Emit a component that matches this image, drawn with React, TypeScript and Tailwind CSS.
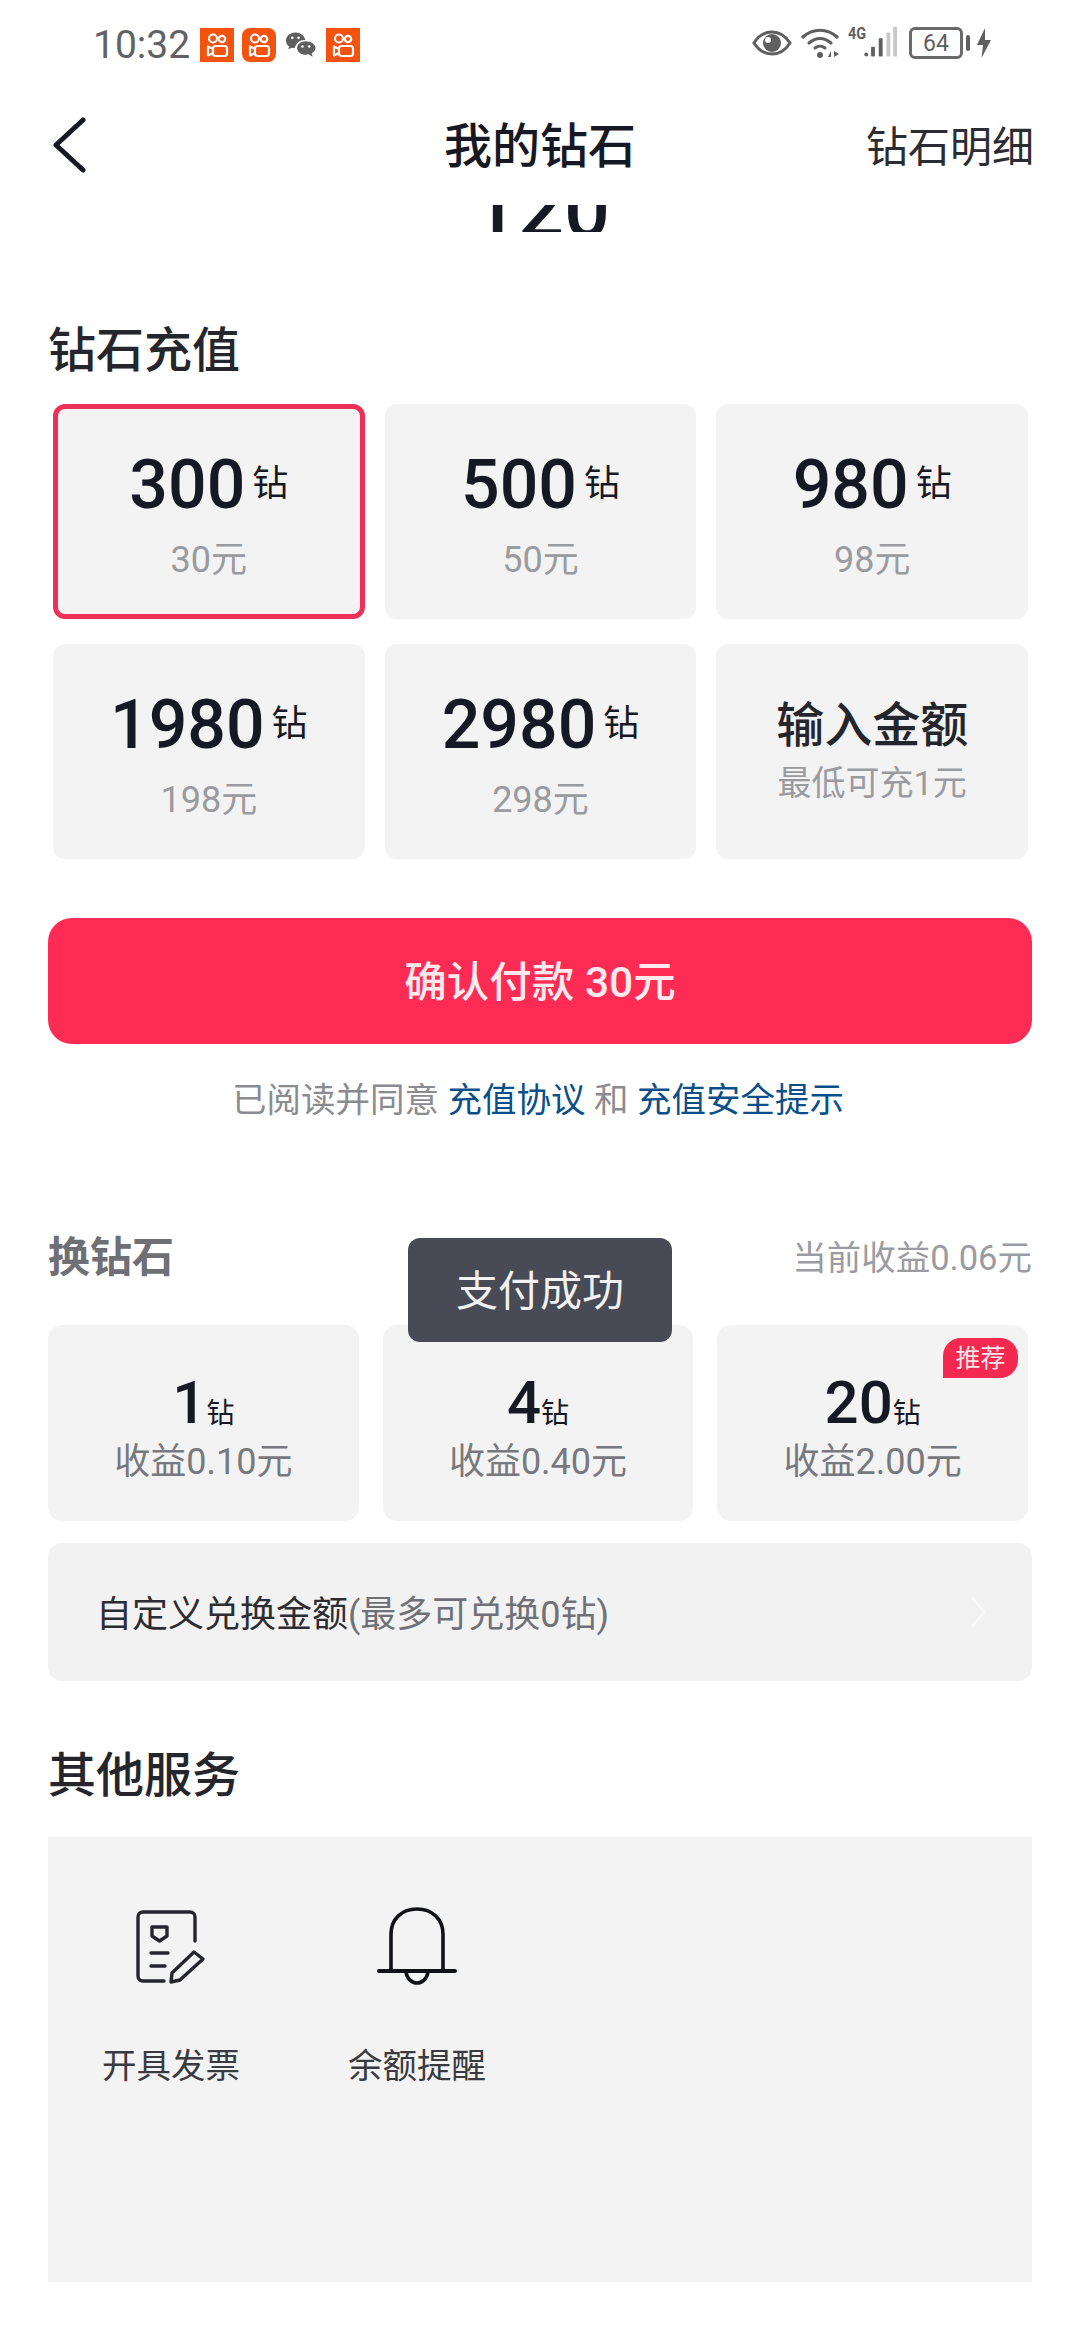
const fontStack = { fontFamily: '"Roboto", "Noto Sans CJK SC", sans-serif' }

const rechargeOptions = [
  { amount: '300', price: '30元', selected: true },
  { amount: '500', price: '50元' },
  { amount: '980', price: '98元' },
  { amount: '1980', price: '198元' },
  { amount: '2980', price: '298元' },
]

const exchangeOptions = [
  { amount: '1', income: '收益0.10元' },
  { amount: '4', income: '收益0.40元' },
  { amount: '20', income: '收益2.00元', badge: true },
]

function KuaishouIcon({ rounded = false }: { rounded?: boolean }) {
  return (
    <svg width="34" height="34" viewBox="0 0 34 34" className={rounded ? 'rounded-[8px]' : ''}>
      <rect width="34" height="34" fill="#f4520f" />
      <g fill="none" stroke="#fff" strokeWidth="2.2">
        <circle cx="13" cy="10.5" r="4" />
        <circle cx="22" cy="11" r="3.2" />
        <rect x="13" y="18" width="14" height="10" rx="2.5" />
        <path d="M13 21 L8 18.5 V27.5 L13 25" strokeLinejoin="round" />
      </g>
    </svg>
  )
}

function WeChatIcon() {
  return (
    <svg width="31" height="28" viewBox="0 0 32 28">
      <path d="M11 1C5 1 1 5 1 9.500C1 12 2.300 14 4.300 15.500L3.500 18.500L7 16.800C8 17.100 9 17.200 10 17.200C12 10 17 8.500 21 8.800C20 4.300 16 1 11 1Z" fill="#5f5f5f" />
      <path d="M21.500 10C16.500 10 12.500 13 12.500 17C12.500 21 16.500 24 21.500 24C22.500 24 23.500 23.800 24.500 23.500L28.500 26L27.500 22.500C30 21 31.500 19.200 31.500 17C31.500 13 26.500 10 21.500 10Z" fill="#5f5f5f" />
      <circle cx="7.500" cy="6.500" r="1.400" fill="#fff" />
      <circle cx="14" cy="6.500" r="1.400" fill="#fff" />
      <circle cx="18" cy="15.500" r="1.300" fill="#fff" />
      <circle cx="25" cy="15.500" r="1.300" fill="#fff" />
    </svg>
  )
}

function StatusRight() {
  return (
    <div className="flex items-center absolute left-[752px] top-[26px] h-[34px]">
      {/* eye */}
      <svg width="40" height="26" viewBox="0 0 40 26">
        <path d="M2 13C7 5 13 2 20 2C27 2 33 5 38 13C33 21 27 24 20 24C13 24 7 21 2 13Z" fill="none" stroke="#5f5f5f" strokeWidth="3" />
        <circle cx="20" cy="13" r="9" fill="#5f5f5f" />
        <circle cx="16" cy="10" r="3" fill="#fff" />
      </svg>
      {/* wifi */}
      <svg width="40" height="30" viewBox="0 0 40 30" className="ml-[9px]">
        <path d="M2 9C12 0 26 0 36 9" fill="none" stroke="#5f5f5f" strokeWidth="3.200" strokeLinecap="round" />
        <path d="M8 15C15 9 23 9 30 15" fill="none" stroke="#5f5f5f" strokeWidth="3.200" strokeLinecap="round" />
        <path d="M14 20C17 17.500 21 17.500 24 20" fill="none" stroke="#5f5f5f" strokeWidth="3" strokeLinecap="round" />
        <circle cx="19" cy="27" r="3" fill="#5f5f5f" />
        <path d="M27 29L30 23V29ZM33 23L38 26L33 29Z" fill="#5f5f5f" />
      </svg>
      {/* signal */}
      <div className="relative w-[50px] h-[34px] ml-[7px]">
        <span className="absolute left-0 top-[-3px] text-[17px] font-bold text-[#5f5f5f] leading-[20px] scale-x-[0.85] origin-left">4G</span>
        <svg width="50" height="34" viewBox="0 0 52 34" className="absolute left-0 top-0">
          <circle cx="19" cy="29" r="2" fill="#5f5f5f" />
          <rect x="24" y="21" width="4" height="10" rx="1" fill="#5f5f5f" />
          <rect x="32" y="12" width="4" height="19" rx="1" fill="#5f5f5f" />
          <rect x="40" y="6" width="4" height="25" rx="1" fill="#c9c9c9" />
          <rect x="47" y="0" width="4" height="31" rx="1" fill="#c9c9c9" />
        </svg>
      </div>
      {/* battery */}
      <div className="flex items-center justify-center w-[54px] h-[32px] ml-[11px] border-[3px] border-[#6a6a6a] rounded-[6px] text-[23px] leading-none text-[#5f5f5f]">
        64
      </div>
      <div className="w-[4px] h-[16px] ml-[3px] rounded-[2px] bg-[#5f5f5f]" />
      <svg width="16" height="30" viewBox="0 0 16 30" className="ml-[6px]">
        <path d="M9 0L1 17H7L5.500 30L15 12H9Z" fill="#5f5f5f" />
      </svg>
    </div>
  )
}

function InvoiceIcon() {
  return (
    <svg width="72" height="76" viewBox="0 0 72 76" fill="none" stroke="#25262b" strokeWidth="3.400" strokeLinecap="round" strokeLinejoin="round">
      <path d="M29 72H8C5 72 3 70 3 67V8C3 5 5 3 8 3H55C58 3 60 5 60 8V32" />
      <path d="M17 18H32V27L24.500 32L17 27Z" />
      <path d="M16 44H33" />
      <path d="M16 57H30" />
      <path d="M59 43L68 50L45 71L36 73L37 64Z" />
    </svg>
  )
}

function BellIcon() {
  return (
    <svg width="80" height="80" viewBox="0 0 80 80" fill="none" stroke="#111216" strokeWidth="3.600" strokeLinecap="round">
      <path d="M14 63V27C14 12 25 2 40 2C55 2 66 12 66 27V63" />
      <path d="M2 64H78" strokeWidth="4" />
      <path d="M29 65C30 72 35 76 40 76C45 76 50 72 51 65" />
    </svg>
  )
}

function App() {
  return (
    <div className="relative w-[1080px] h-[2340px] bg-white overflow-hidden text-[#161823]" style={fontStack}>
      {/* status bar */}
      <div className="h-[90px] flex items-center pl-[93px]">
        <span className="w-[107px] text-[39px] leading-none text-[#5f6266]">10:32</span>
        <KuaishouIcon />
        <div className="ml-[8px]"><KuaishouIcon rounded /></div>
        <div className="ml-[9px] mr-[10px]"><WeChatIcon /></div>
        <KuaishouIcon />
      </div>
      <StatusRight />

      {/* header */}
      <div className="relative h-[110px] flex items-center justify-center">
        <svg width="34" height="56" viewBox="0 0 34 56" className="absolute left-[52px] top-[27px]" fill="none" stroke="#161823" strokeWidth="5" strokeLinecap="round" strokeLinejoin="round">
          <path d="M31 3L4 28L31 53" />
        </svg>
        <span className="mt-[4px] text-[48px] font-medium">我的钻石</span>
        <span className="absolute right-[46px] top-[30px] text-[42px] leading-[56px] text-[#2c2d33]">钻石明细</span>
      </div>

      {/* balance, scrolled under the header */}
      <div className="mt-[5px] h-[27px] overflow-hidden flex items-end justify-center">
        <span className="ml-[2px] text-[81px] leading-[45px] font-medium">120</span>
      </div>

      <h2 className="mt-[89px] ml-[48px] text-[48px] leading-[60px] font-medium text-[#25262c]">钻石充值</h2>

      <div className="mt-[23px] ml-[53px] mr-[52px] grid grid-cols-3 gap-x-[20px] gap-y-[25px]">
        {rechargeOptions.map((o) => (
          <div
            key={o.amount}
            className={`h-[215px] rounded-[12px] bg-[#f3f3f4] flex flex-col items-center ${
              o.selected ? 'border-[5px] border-[#ee3058] pt-[36px]' : 'pt-[41px]'
            }`}
          >
            <div className="h-[80px] flex items-center gap-[7px]">
              <span className="text-[68px] leading-none font-medium">{o.amount}</span>
              <span className="text-[36px] leading-none mt-[-2px]">钻</span>
            </div>
            <div className="mt-[13px] h-[44px] text-[36px] leading-[44px] text-[#9a9b9e]">{o.price}</div>
          </div>
        ))}
        <div className="h-[215px] rounded-[12px] bg-[#f3f3f4] flex flex-col items-center pt-[50px]">
          <div className="h-[64px] text-[48px] leading-[64px] font-medium text-[#25262c]">输入金额</div>
          <div className="mt-[3px] h-[44px] text-[34px] leading-[44px] text-[#9a9b9e]">最低可充1元</div>
        </div>
      </div>

      {/* pay button */}
      <div className="mt-[59px] mx-[48px] h-[126px] rounded-[24px] bg-[#fe2c55] flex items-center justify-center pt-[4px] text-[42.500px] font-medium text-[#fdeaed]">
        确认付款 30元
      </div>

      <p className="mt-[34px] h-[44px] pr-[4px] text-center text-[34.500px] leading-[44px] text-[#8a8b90]">
        已阅读并同意 <span className="text-[#0b4f8a]">充值协议</span> 和 <span className="text-[#0b4f8a]">充值安全提示</span>
      </p>

      {/* exchange */}
      <div className="mt-[111px] mx-[48px] flex items-center justify-between h-[50px]">
        <span className="text-[42px] leading-[50px] font-bold text-[#6e7076]">换钻石</span>
        <span className="text-[34.500px] leading-[50px] text-[#9a9ca1]">当前收益0.06元</span>
      </div>

      <div className="mt-[42px] ml-[48px] mr-[52px] grid grid-cols-3 gap-x-[24px]">
        {exchangeOptions.map((o) => (
          <div key={o.amount} className="relative h-[196px] rounded-[14px] bg-[#f3f3f4] flex flex-col items-center pt-[44px]">
            {o.badge && (
              <span className="absolute right-[10px] top-[13px] w-[75px] h-[40px] bg-[#f5284f] rounded-[18px] rounded-bl-none flex items-center justify-center text-[25px] leading-none text-[#fde4e9]">
                推荐
              </span>
            )}
            <div className="h-[66px] flex items-end">
              <span className="text-[60px] leading-[64px] font-medium">{o.amount}</span>
              <span className="text-[28px] leading-[36px] mb-[3px]">钻</span>
            </div>
            <div className="mt-[2px] h-[50px] text-[36px] leading-[50px] text-[#77797e]">{o.income}</div>
          </div>
        ))}
      </div>

      <div className="mt-[22px] mx-[48px] h-[138px] rounded-[14px] bg-[#f2f2f3] flex items-center justify-between pl-[48px] pr-[46px]">
        <span className="pt-[5px] text-[36px] text-[#2c2d33]">
          自定义兑换金额<span className="text-[#6f7176]">(最多可兑换0钻)</span>
        </span>
        <svg width="16" height="34" viewBox="0 0 16 34" fill="none" stroke="#f8f8f9" strokeWidth="2.500">
          <path d="M2 2L14 17L2 32" />
        </svg>
      </div>

      {/* other services */}
      <h2 className="mt-[63px] ml-[48px] text-[48px] leading-[64px] font-medium text-[#25262c]">其他服务</h2>

      <div className="mt-[29px] mx-[48px] h-[445px] bg-[#f3f3f4] flex">
        <div className="w-[246px] flex flex-col items-center pt-[72px]">
          <InvoiceIcon />
          <span className="mt-[58px] text-[34.500px] leading-[46px] text-[#3a3b40]">开具发票</span>
        </div>
        <div className="w-[246px] flex flex-col items-center pt-[70px]">
          <BellIcon />
          <span className="mt-[56px] text-[34.500px] leading-[46px] text-[#3a3b40]">余额提醒</span>
        </div>
      </div>

      {/* toast */}
      <div className="absolute left-[408px] top-[1238px] w-[264px] h-[104px] rounded-[12px] bg-[#484b55] flex items-center justify-center pt-[3px] text-[42px] text-[#f2f2f3]">
        支付成功
      </div>
    </div>
  )
}

export default App
